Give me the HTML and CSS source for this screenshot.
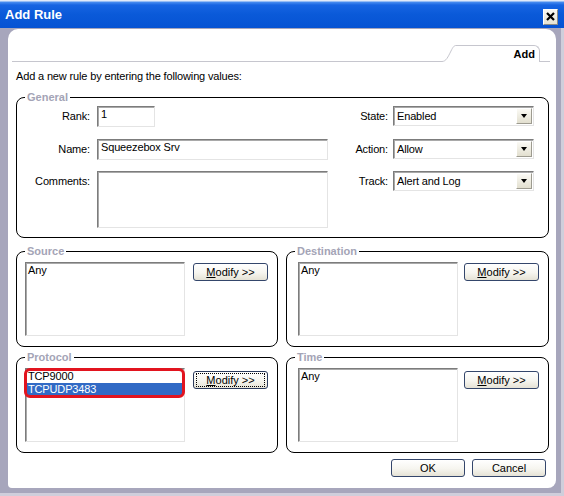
FILE: index.html
```html
<!DOCTYPE html>
<html>
<head>
<meta charset="utf-8">
<title>Add Rule</title>
<link rel="stylesheet" href="styles.css">
</head>
<body>
<div class="window">
  <div class="titlebar">
    <span class="title">Add Rule</span>
    <div class="close"><svg width="9" height="9" viewBox="0 0 9 9"><path d="M1 1L8 8M8 1L1 8" stroke="#000" stroke-width="2.2" fill="none"/></svg></div>
  </div>
  <div class="frame">
    <div class="panel">
      <div class="tabstrip">
        <div class="tabline"></div>
        <svg class="tabslant" width="14" height="17" viewBox="0 0 14 17"><path d="M0 16.5 C4 16.5 6 12 9 6 C11 2 12 0.5 14 0.5" fill="none" stroke="#c6c6ce" stroke-width="1"/></svg>
        <div class="tab">Add</div>
        <div class="tabstub"></div>
      </div>
      <p class="intro">Add a new rule by entering the following values:</p>

      <fieldset class="group">
        <legend>General</legend>
        <div class="general-grid">
          <div class="lbl">Rank:</div>
          <div class="field rank">1</div>
          <div class="lbl lbl2">State:</div>
          <div class="select"><span>Enabled</span><span class="drop"></span></div>

          <div class="lbl">Name:</div>
          <div class="field name">Squeezebox Srv</div>
          <div class="lbl lbl2">Action:</div>
          <div class="select"><span>Allow</span><span class="drop"></span></div>

          <div class="lbl lbl-top">Comments:</div>
          <div class="field comments"></div>
          <div class="lbl lbl2">Track:</div>
          <div class="select"><span>Alert and Log</span><span class="drop"></span></div>
        </div>
      </fieldset>

      <div class="pair first">
        <fieldset class="group">
          <legend>Source</legend>
          <div class="listrow left">
            <div class="listbox"><div class="item">Any</div></div>
            <div class="btn modify"><u>M</u>odify &gt;&gt;</div>
          </div>
        </fieldset>
        <fieldset class="group">
          <legend>Destination</legend>
          <div class="listrow right">
            <div class="listbox"><div class="item">Any</div></div>
            <div class="btn modify"><u>M</u>odify &gt;&gt;</div>
          </div>
        </fieldset>
      </div>

      <div class="pair second">
        <fieldset class="group">
          <legend>Protocol</legend>
          <div class="listrow left">
            <div class="listbox proto">
              <div class="item">TCP9000</div>
              <div class="item selected">TCPUDP3483</div>
              <div class="highlight"></div>
            </div>
            <div class="btn modify low focused"><span class="focusring"><u>M</u>odify &gt;&gt;</span></div>
          </div>
        </fieldset>
        <fieldset class="group">
          <legend>Time</legend>
          <div class="listrow right">
            <div class="listbox"><div class="item">Any</div></div>
            <div class="btn modify low"><u>M</u>odify &gt;&gt;</div>
          </div>
        </fieldset>
      </div>

      <div class="actions">
        <div class="btn action">OK</div>
        <div class="btn action">Cancel</div>
      </div>
    </div>
  </div>
</div>
</body>
</html>
```
FILE: styles.css
```css
* { box-sizing: border-box; }
html, body { margin: 0; padding: 0; }
body {
  width: 564px;
  height: 496px;
  overflow: hidden;
  font-family: "Liberation Sans", Arial, sans-serif;
  font-size: 11px;
  letter-spacing: -0.15px;
  color: #000;
  background: #a7a6bc;
}
.window {
  width: 564px;
  height: 496px;
  display: flex;
  flex-direction: column;
  background: #a7a6bc;
}
.titlebar {
  height: 28px;
  flex: none;
  display: flex;
  align-items: center;
  padding: 0 6px 0 5px;
  background: linear-gradient(to bottom, #dfe9f9 0, #dfe9f9 1px, #4a8ef0 2px, #1764e2 5px, #0a5ad9 14px, #0653d3 100%);
}
.title {
  color: #fff;
  font-weight: bold;
  font-size: 13px;
  letter-spacing: 0;
  line-height: 16px;
  margin-top: 2px;
}
.close {
  margin-left: auto;
  margin-top: 5px;
  width: 15px;
  height: 16px;
  display: flex;
  align-items: center;
  justify-content: center;
  background: linear-gradient(to bottom, #f8f7f1, #e6e3d3);
  border: 1px solid;
  border-color: #ffffff #8d8c86 #8d8c86 #ffffff;
}
.frame {
  flex: 1;
  display: flex;
  padding: 1px 5px 5px 8px;
  border-right: 3px solid #cfcedb;
  border-bottom: 3px solid #cfcedb;
}
.panel {
  flex: 1;
  background: #fff;
  border-radius: 10px 10px 8px 4px;
  padding: 0 7px 0 8px;
  display: flex;
  flex-direction: column;
}
.tabstrip {
  height: 33px;
  flex: none;
  display: flex;
  align-items: flex-end;
  margin: 0 -1px 0 -4px;
}
.tabline {
  flex: 1;
  height: 1px;
  background: #c6c6ce;
}
.tabslant { display: block; flex: none; }
.tab {
  width: 84px;
  height: 17px;
  flex: none;
  border-top: 1px solid #c6c6ce;
  border-right: 1px solid #c6c6ce;
  border-top-right-radius: 6px;
  text-align: right;
  padding: 2px 4px 0 0;
  font-weight: bold;
  line-height: 13px;
  letter-spacing: 0;
}
.tabstub {
  width: 10px;
  height: 1px;
  flex: none;
  background: #c6c6ce;
}
.intro {
  margin: 8px 0 8px 0;
  line-height: 13px;
}
fieldset.group {
  margin: 0;
  min-width: 0;
  border: 1px solid #000;
  border-radius: 8px;
  padding: 2px 0 9px 0;
}
fieldset.group legend {
  margin-left: 8px;
  padding: 0 2px;
  font-weight: bold;
  font-size: 11px;
  line-height: 13px;
  letter-spacing: 0;
  color: #a4a4b6;
}
.general-grid {
  display: grid;
  grid-template-columns: 80px 231px 65px 141px;
  grid-template-rows: 22px 21px 57px;
  row-gap: 11px;
}
.lbl {
  text-align: right;
  padding-right: 7px;
  line-height: 21px;
  height: 21px;
  align-self: start;
}
.lbl2 { padding-right: 5px; line-height: 20px; }
.field, .select, .listbox {
  background: #fff;
  border-style: solid;
  border-width: 1px;
  border-color: #7c7c7c #e4e4e4 #e4e4e4 #7c7c7c;
  box-shadow: inset 1px 1px 0 #a9a9a9;
}
.field {
  align-self: start;
  height: 21px;
  padding: 1px 0 0 3px;
  line-height: 12px;
}
.rank { width: 58px; }
.name { width: 231px; }
.comments { height: 57px; }
.select {
  align-self: start;
  height: 20px;
  display: flex;
  align-items: center;
  padding-left: 3px;
}
.drop {
  margin-left: auto;
  margin-right: 1px;
  width: 16px;
  height: 16px;
  display: flex;
  align-items: center;
  justify-content: center;
  background: linear-gradient(to bottom, #fbfaf5, #e2dfcf);
  border: 1px solid;
  border-color: #ffffff #9d9b90 #9d9b90 #ffffff;
}
.drop::before {
  content: "";
  border-top: 4px solid #000;
  border-left: 3.5px solid transparent;
  border-right: 3.5px solid transparent;
}
.pair {
  display: grid;
  grid-template-columns: 262px 263px;
  column-gap: 8px;
}
.pair.first { margin-top: 7px; }
.pair.second { margin-top: 4px; }
.pair fieldset.group { padding: 4px 0 10px 0; }
.listrow {
  display: flex;
  align-items: flex-start;
}
.listrow.left { padding-left: 8px; column-gap: 8px; }
.listrow.right { padding-left: 11px; column-gap: 6px; }
.listbox {
  width: 160px;
  height: 74px;
  padding: 1px 0 0 1px;
}
.item {
  line-height: 13px;
  height: 13px;
  padding-left: 1px;
  white-space: nowrap;
}
.item.selected {
  background: #316ac5;
  color: #fff;
  margin-right: 1px;
}
.proto { position: relative; }
.highlight {
  position: absolute;
  left: -2px;
  top: -1px;
  width: 161px;
  height: 30px;
  border: 3px solid #e2141f;
  border-radius: 6px;
}
.btn {
  height: 18px;
  border: 1px solid #34466b;
  border-radius: 3px;
  background: linear-gradient(to bottom, #ffffff 0%, #f6f5ef 55%, #e5e2d5 100%);
  text-align: center;
  line-height: 16px;
  letter-spacing: 0;
}
.modify { width: 75px; margin-top: 1px; }
.modify.low { margin-top: 3px; }
.btn.focused { padding: 1px 2px; border-color: #2a3a5c; }
.focusring {
  display: block;
  height: 14px;
  line-height: 12px;
  border: 1px dotted #000;
}
.actions {
  display: flex;
  justify-content: flex-end;
  column-gap: 7px;
  margin: 6px 3px 0 0;
}
.action { width: 74px; }
u { text-decoration: underline; text-underline-offset: 1px; }
```
